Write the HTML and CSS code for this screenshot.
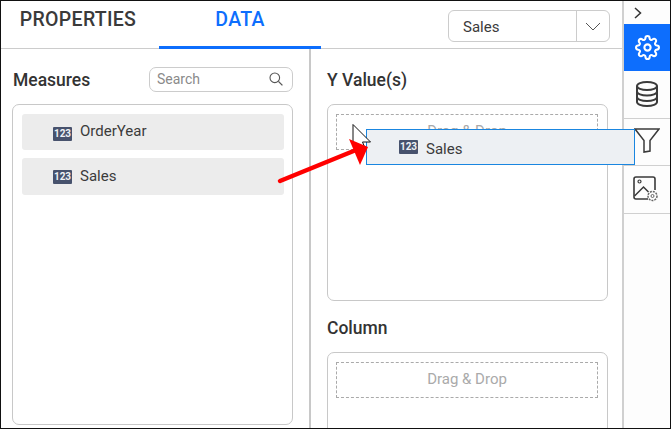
FILE: index.html
```html
<!DOCTYPE html>
<html lang="en">
<head>
  <meta charset="UTF-8" />
  <title>Chart properties</title>
  <link rel="stylesheet" href="styles.css">
</head>
<body>
  <div class="frame">
    <div class="panel">
      <div class="tabs">
        <div class="tab">PROPERTIES</div>
        <div class="tab active">DATA</div>
        <div class="select">
          <span class="select-value">Sales</span>
          <span class="select-arrow">
            <svg width="16" height="9" viewBox="0 0 16 9"><path d="M1 1l7 7 7-7" fill="none" stroke="#555" stroke-width="1"/></svg>
          </span>
        </div>
      </div>

      <div class="columns">
        <div class="col col-left">
          <div class="col-head">
            <h2>Measures</h2>
            <div class="search">
              <span>Search</span>
              <svg width="16" height="16" viewBox="0 0 16 16"><circle cx="6.8" cy="6.8" r="4.8" fill="none" stroke="#555" stroke-width="1.1"/><path d="M10.4 10.4l4 4" stroke="#555" stroke-width="1.3"/></svg>
            </div>
          </div>
          <div class="box box-fill">
            <div class="item"><span class="num low">123</span>OrderYear</div>
            <div class="item"><span class="num">123</span>Sales</div>
          </div>
        </div>

        <div class="col col-right">
          <h2 class="col-head">Y Value(s)</h2>
          <div class="box box-y">
            <div class="drop">Drag &amp; Drop</div>
          </div>
          <h2 class="col-head second">Column</h2>
          <div class="box box-column">
            <div class="drop">Drag &amp; Drop</div>
          </div>
        </div>
      </div>
    </div>

    <div class="rail">
      <div class="rail-toggle">
        <svg width="10" height="12" viewBox="0 0 10 12"><path d="M2 1l5.5 5L2 11" fill="none" stroke="#333" stroke-width="1.5"/></svg>
      </div>
      <div class="rail-btn selected">
        <svg width="25" height="25" viewBox="0 0 24 24" fill="none" stroke="#fff" stroke-width="2"><circle cx="12" cy="12" r="3"/><path d="M19.4 15a1.65 1.65 0 0 0 .33 1.82l.06.06a2 2 0 0 1 0 2.83 2 2 0 0 1-2.83 0l-.06-.06a1.65 1.65 0 0 0-1.82-.33 1.65 1.65 0 0 0-1 1.51V21a2 2 0 0 1-2 2 2 2 0 0 1-2-2v-.09A1.65 1.65 0 0 0 9 19.4a1.65 1.65 0 0 0-1.82.33l-.06.06a2 2 0 0 1-2.83 0 2 2 0 0 1 0-2.83l.06-.06a1.65 1.65 0 0 0 .33-1.82 1.65 1.65 0 0 0-1.51-1H3a2 2 0 0 1-2-2 2 2 0 0 1 2-2h.09A1.65 1.65 0 0 0 4.6 9a1.65 1.65 0 0 0-.33-1.82l-.06-.06a2 2 0 0 1 0-2.83 2 2 0 0 1 2.83 0l.06.06a1.65 1.65 0 0 0 1.82.33H9a1.65 1.65 0 0 0 1-1.51V3a2 2 0 0 1 2-2 2 2 0 0 1 2 2v.09a1.65 1.65 0 0 0 1 1.51 1.65 1.65 0 0 0 1.82-.33l.06-.06a2 2 0 0 1 2.83 0 2 2 0 0 1 0 2.83l-.06.06a1.65 1.65 0 0 0-.33 1.82V9a1.65 1.65 0 0 0 1.51 1H21a2 2 0 0 1 2 2 2 2 0 0 1-2 2h-.09a1.65 1.65 0 0 0-1.51 1z"/></svg>
      </div>
      <div class="rail-btn">
        <svg width="24" height="26" viewBox="0 0 24 26" fill="none" stroke="#3a3a3a" stroke-width="2"><ellipse cx="12" cy="5" rx="10" ry="4"/><path d="M2 5v16c0 2.2 4.5 4 10 4s10-1.8 10-4V5"/><path d="M2 10.5c0 2.2 4.5 4 10 4s10-1.8 10-4"/><path d="M2 16c0 2.2 4.5 4 10 4s10-1.8 10-4"/></svg>
      </div>
      <div class="rail-btn">
        <svg class="funnel" width="26" height="25" viewBox="0 0 26 25" fill="none" stroke="#3a3a3a" stroke-width="1.5"><path d="M1 1h24l-9 11.5V23l-6 1V12.5z"/></svg>
      </div>
      <div class="rail-btn">
        <svg class="picture" width="26" height="26" viewBox="0 0 26 26" fill="none"><path d="M15 23H3a2 2 0 0 1-2-2V3a2 2 0 0 1 2-2h17a2 2 0 0 1 2 2v11" stroke="#3a3a3a" stroke-width="1.6"/><circle cx="6.5" cy="5.5" r="1.5" stroke="#3a3a3a" stroke-width="1.2"/><path d="M1.5 20l9-9 5 5" stroke="#3a3a3a" stroke-width="1.5"/><circle cx="19.5" cy="20" r="4.5" stroke="#666" stroke-width="1.5" stroke-dasharray="2 1"/><circle cx="19.5" cy="20" r="1.5" stroke="#666"/></svg>
      </div>
    </div>

    <div class="ghost"><span class="num">123</span><span class="ghost-label">Sales</span></div>

    <svg class="annotation" width="671" height="429" viewBox="0 0 671 429">
      <path d="M353 124.5V146l4-3 3 7 5-2-2.5-6h8z" fill="#fff" stroke="#111" stroke-width="1"/>
      <path d="M280 181l76-31" stroke="#ff0000" stroke-width="4.5" stroke-linecap="round"/>
      <polygon points="349,139 368,147 360,165" fill="#ff0000"/>
    </svg>
  </div>
</body>
</html>
```

FILE: styles.css
```css
* {
  margin: 0;
  padding: 0;
  box-sizing: border-box;
}

body {
  font-family: Roboto, 'Liberation Sans', sans-serif;
  color: #3b3b3b;
  background: #fff;
}

h2 {
  font-size: 17.5px;
  font-weight: 500;
  color: #333;
}

.frame {
  position: relative;
  display: flex;
  width: 671px;
  height: 429px;
  border: 1px solid #111;
  overflow: hidden;
}

.panel {
  display: flex;
  flex-direction: column;
  width: 621px;
}

.tabs {
  display: flex;
  height: 48px;
  border-bottom: 1px solid #ccc;
  flex-shrink: 0;
}

.tab {
  width: 158px;
  height: 48px;
  padding-right: 4px;
  line-height: 38px;
  text-align: center;
  font-size: 19.5px;
  font-weight: 500;
  letter-spacing: 0.3px;
  color: #3a3a3a;
}

.tab.active {
  width: 162px;
  padding-right: 0;
  color: #0d6efd;
  border-bottom: 3px solid #0d6efd;
}

.select {
  display: flex;
  width: 162px;
  height: 32px;
  margin: 9px 12px 0 auto;
  border: 1px solid #ccc;
  border-radius: 6px;
  font-size: 15px;
}

.select-value {
  flex: 1;
  padding-left: 14px;
  line-height: 32px;
}

.select-arrow {
  display: flex;
  align-items: center;
  justify-content: center;
  width: 33px;
  border-left: 1px solid #ccc;
}

.columns {
  display: flex;
  flex: 1;
  min-height: 0;
}

.col {
  display: flex;
  flex-direction: column;
  padding-top: 18px;
}

.col-left {
  width: 310px;
  padding-left: 11px;
  padding-right: 16px;
  padding-bottom: 3px;
  border-right: 2px solid #c8c8c8;
}

.col-left h2 {
  padding-left: 1px;
}

.col-right {
  width: 311px;
  padding-left: 16px;
  padding-right: 14px;
}

.col-head {
  display: flex;
  align-items: center;
  justify-content: space-between;
  height: 25px;
  margin-bottom: 12px;
  flex-shrink: 0;
}

.col-head.second {
  margin-top: 14px;
}

.search {
  display: flex;
  align-items: center;
  justify-content: space-between;
  width: 144px;
  height: 25px;
  padding: 0 8px 1px 7px;
  border: 1px solid #ccc;
  border-radius: 7px;
  font-size: 14px;
  color: #8a8a8a;
}

.box {
  border: 1px solid #c8c8c8;
  border-radius: 7px;
  padding: 9px 8px 9px 9px;
  flex-shrink: 0;
}

.box-fill {
  flex: 1;
}

.box-y {
  height: 197px;
  padding-left: 8px;
  padding-right: 9px;
}

.box-column {
  height: 120px;
  padding-left: 8px;
  padding-right: 9px;
}

.item {
  display: flex;
  align-items: center;
  height: 36px;
  margin-bottom: 8px;
  padding-left: 31px;
  padding-bottom: 2px;
  font-size: 15px;
  background: #ececec;
  border-radius: 3px;
}

.item + .item {
  height: 37px;
}

.num {
  width: 19px;
  height: 14px;
  margin-right: 8px;
  font-size: 10px;
  font-weight: 700;
  line-height: 14px;
  text-align: center;
  color: #eef0f4;
  background: #47526d;
  border-radius: 1px;
}

.item .num {
  margin-top: 2px;
}

.item .num.low {
  margin-top: 5px;
}

.drop {
  height: 36px;
  line-height: 32px;
  text-align: center;
  font-size: 15px;
  color: #aaa;
  border: 1px dashed #aaa;
}

.rail {
  width: 48px;
  border-left: 2px solid #d0d0d0;
  background: #fdfdfd;
}

.rail-toggle {
  display: flex;
  align-items: center;
  height: 23px;
  padding-left: 9px;
}

.rail-btn {
  display: flex;
  align-items: center;
  justify-content: center;
  height: 47.5px;
  border-bottom: 1px solid #d0d0d0;
}

.rail-btn.selected {
  height: 47px;
  background: #0d6efd;
  border-bottom: none;
}

.funnel {
  margin-top: -2px;
}

.picture {
  margin-right: 2px;
  margin-top: -1px;
}

/* dragged field, sits over the drop zone */
.ghost {
  position: absolute;
  left: 365px;
  top: 128px;
  display: flex;
  align-items: center;
  width: 269px;
  height: 36px;
  padding-left: 32px;
  font-size: 15px;
  background: #edf0f3;
  border: 1px solid #1a86e0;
}

.ghost-label {
  margin-top: 4px;
}

.annotation {
  position: absolute;
  left: -1px;
  top: -1px;
}
```
